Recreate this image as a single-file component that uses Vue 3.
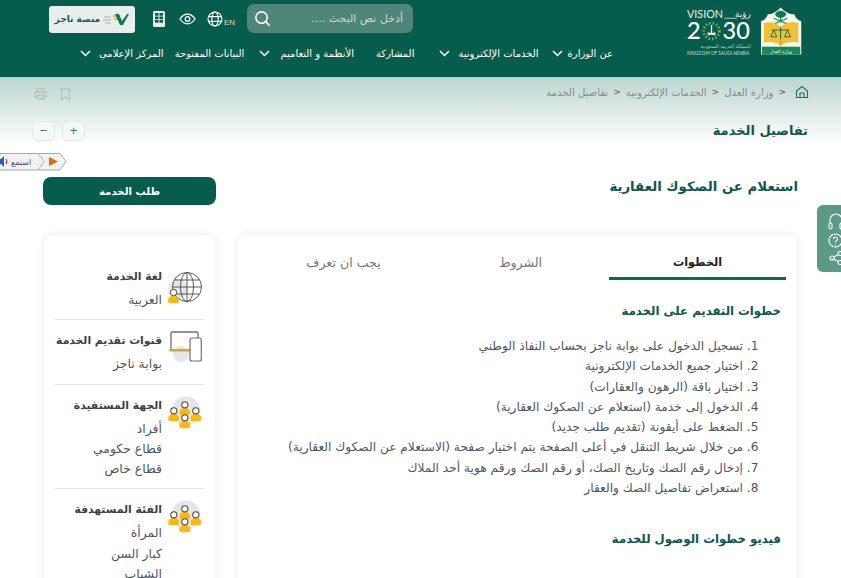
<script setup>
const navItems = [
  { label: "عن الوزارة", arrow: true },
  { label: "الخدمات الإلكترونية", arrow: true },
  { label: "المشاركة", arrow: false },
  { label: "الأنظمة و التعاميم", arrow: true },
  { label: "البيانات المفتوحة", arrow: false },
  { label: "المركز الإعلامي", arrow: true },
];

const crumbs = ["وزارة العدل", "الخدمات الإلكترونية", "تفاصيل الخدمة"];

const tabs = ["الخطوات", "الشروط", "يجب ان تعرف"];

const steps = [
  "تسجيل الدخول على بوابة ناجز بحساب النفاذ الوطني",
  "اختيار جميع الخدمات الإلكترونية",
  "اختيار باقة (الرهون والعقارات)",
  "الدخول إلى خدمة (استعلام عن الصكوك العقارية)",
  "الضغط على أيقونة (تقديم طلب جديد)",
  "من خلال شريط التنقل في أعلى الصفحة يتم اختيار صفحة (الاستعلام عن الصكوك العقارية)",
  "إدخال رقم الصك وتاريخ الصك، أو رقم الصك ورقم هوية أحد الملاك",
  "استعراض تفاصيل الصك والعقار",
];

const sideItems = [
  { icon: "globe", title: "لغة الخدمة", lines: ["العربية"] },
  { icon: "devices", title: "قنوات تقديم الخدمة", lines: ["بوابة ناجز"] },
  { icon: "group", title: "الجهة المستفيدة", lines: ["أفراد", "قطاع حكومي", "قطاع خاص"] },
  { icon: "group", title: "الفئة المستهدفة", lines: ["المرأة", "كبار السن", "الشباب"] },
];

const people = [
  { x: 11, y: 5 },
  { x: 0, y: 11 },
  { x: 22, y: 11 },
  { x: 11, y: 18 },
];
</script>

<template>
  <div class="page" dir="rtl">
    <header class="header">
      <div class="logos">
        <svg class="moj-logo" width="43" height="50" viewBox="0 0 43 50">
          <path d="M1 49V15C5 14 7 11 8 8c4 0 8-2 13-7 5 5 9 7 14 7 1 3 3 6 7 7v34z" fill="#f4f6f2" />
          <path d="M21 7v9" stroke="#0d7a4d" stroke-width="1.5" />
          <ellipse cx="21" cy="8" rx="5.5" ry="3.5" fill="#0d7a4d" />
          <path d="M14 12l14 6M28 12l-14 6" stroke="#2a8a50" stroke-width="1.2" />
          <path d="M4 17c7-2 13 0 17 4 4-4 11-6 18-4v20c-7-2-14 0-18 3-4-3-10-5-17-3z" fill="#f3bf37" />
          <path d="M21 21v19" stroke="#cf9420" />
          <path d="M12 24h18M21 21v12M14 24l-3 7h6zM28 24l-3 7h6z" stroke="#0d6a45" fill="none" stroke-width="0.9" />
          <rect x="2" y="41" width="39" height="8" fill="#178a55" />
          <text x="21.5" y="47.5" text-anchor="middle" class="moj-text">وزارة العدل</text>
        </svg>
        <svg class="vision-logo" width="66" height="50" viewBox="0 0 66 50">
          <text x="0" y="12" class="v-word">VISION</text>
          <text x="65" y="11" text-anchor="end" class="v-ar">رؤية</text>
          <path d="M38 12h13" stroke="#d9e8e2" stroke-width="0.8" />
          <text x="0" y="33" class="v-year">2</text>
          <text x="64" y="33" text-anchor="end" class="v-year">30</text>
          <circle cx="25" cy="25" r="8" fill="none" stroke="#6fae5a" stroke-width="3" stroke-dasharray="1.5 2" />
          <path d="M25 19v8M21 29l8-2M29 29l-8-2" stroke="#fff" stroke-width="1.3" />
          <text x="65" y="42" text-anchor="end" class="v-small">المملكة العربية السعودية</text>
          <text x="0" y="49" class="v-tiny">KINGDOM OF SAUDI ARABIA</text>
        </svg>
      </div>

      <div class="header-main">
        <div class="top-row">
          <div class="search">
            <span class="search-text">أدخل نص البحث ....</span>
            <svg width="17" height="17" viewBox="0 0 18 18" fill="none" stroke="#fff" stroke-width="1.7">
              <circle cx="8" cy="8" r="6" />
              <path d="M12.5 12.5l4 4" />
            </svg>
          </div>
          <div class="lang">
            <span class="lang-en">EN</span>
            <svg width="16" height="16" viewBox="0 0 16 16" fill="none" stroke="#fff" stroke-width="1.1">
              <circle cx="8" cy="8" r="7" />
              <ellipse cx="8" cy="8" rx="3.2" ry="7" />
              <path d="M1 5.6h14M1 10.4h14" />
            </svg>
          </div>
          <svg width="17" height="12" viewBox="0 0 17 12" fill="none" stroke="#fff" stroke-width="1.3">
            <path d="M1 6c2-3 4.500-4.800 7.500-4.800S14 3 16 6c-2 3-4.500 4.800-7.500 4.800S3 9 1 6z" />
            <circle cx="8.500" cy="6" r="2.300" />
          </svg>
          <svg class="phone" width="12" height="16" viewBox="0 0 12 16">
            <rect width="12" height="16" rx="1.500" fill="#e8eeec" />
            <rect x="2" y="2" width="3.500" height="2.700" fill="#075d4b" />
            <rect x="6.500" y="2" width="3.500" height="2.700" fill="#075d4b" />
            <rect x="2" y="5.500" width="3.500" height="2.700" fill="#075d4b" />
            <rect x="6.500" y="5.500" width="3.500" height="2.700" fill="#075d4b" />
            <rect x="2" y="9" width="3.500" height="2.700" fill="#075d4b" />
            <rect x="6.500" y="9" width="3.500" height="2.700" fill="#075d4b" />
          </svg>
          <button class="naji">
            <svg width="26" height="14" viewBox="0 0 26 14" fill="none">
              <path d="M10 4h6M11 7h5" stroke="#e8a82d" stroke-width="1.400" />
              <path d="M12 2h4l3 7 5-7h2l-6 11h-3z" fill="#0f7a4e" />
              <path d="M1 5h7M0 8h8M2 11h6" stroke="#a7b2ae" stroke-width="1" />
            </svg>
            <span>منصة ناجز</span>
          </button>
        </div>
        <nav class="nav">
          <div v-for="item in navItems" :key="item.label" class="nav-item">
            <span>{{ item.label }}</span>
            <svg v-if="item.arrow" width="11" height="7" viewBox="0 0 11 7" fill="none" stroke="#fff" stroke-width="1.500">
              <path d="M1 1l4.500 4.500L10 1" />
            </svg>
          </div>
        </nav>
      </div>
    </header>

    <section class="hero">
      <div class="crumb-row">
        <div class="crumbs">
          <svg class="home" width="14" height="14" viewBox="0 0 14 14" fill="none" stroke="#2b6b60" stroke-width="1.100">
            <path d="M1.500 6L7 1.500 12.500 6v6.500h-11z" />
            <path d="M5 12.500V8h4v4.500" />
          </svg>
          <template v-for="crumb in crumbs" :key="crumb">
            <span class="crumb-sep">&gt;</span>
            <span>{{ crumb }}</span>
          </template>
        </div>
        <div class="crumb-tools">
          <svg width="11" height="13" viewBox="0 0 11 13" fill="none" stroke="#b5c4bf" stroke-width="1.300">
            <path d="M1.500 1h8v11L5.500 9l-4 3z" />
          </svg>
          <svg width="13" height="12" viewBox="0 0 13 12" fill="none" stroke="#b5c4bf" stroke-width="1.300">
            <path d="M3 4V1h7v3M3 9H1V4h11v5h-2M3 7.500h7V11H3z" />
          </svg>
        </div>
      </div>
      <div class="title-row">
        <h1>تفاصيل الخدمة</h1>
        <div class="zoom-btns">
          <button>+</button>
          <button>−</button>
        </div>
      </div>
    </section>

    <div class="listen">
      <svg width="67" height="18" viewBox="0 0 67 18">
        <path d="M-1 .5h61l6 8-6 8.500H-1z" fill="#f2f2f2" stroke="#a9a9a9" />
        <path d="M38 .5l6 8-6 8.500" fill="none" stroke="#b5b5b5" />
        <path d="M49 4l9 4.500L49 13z" fill="#e26a0a" />
        <text x="21" y="11.500" text-anchor="middle" class="listen-text">استمع</text>
        <path d="M-2 6h3l3-3v11l-3-3h-3z" fill="#1f5fc0" />
        <path d="M6 6c1 1.500 1 3.500 0 5" fill="none" stroke="#d8402a" stroke-width="1.200" />
      </svg>
    </div>

    <aside class="float-tab">
      <svg width="16" height="17" viewBox="0 0 16 17" fill="none" stroke="#fff" stroke-width="1.100">
        <path d="M2 10V7a6 6 0 0 1 12 0v3" />
        <rect x="1" y="10" width="3" height="6" rx="1.500" />
        <rect x="12" y="10" width="3" height="6" rx="1.500" />
      </svg>
      <svg width="15" height="15" viewBox="0 0 15 15" fill="none" stroke="#fff" stroke-width="1.100">
        <circle cx="7.500" cy="7.500" r="6.500" />
        <path d="M5.500 6a2 2 0 1 1 3 1.700c-.7.400-1 .8-1 1.500M7.500 11v.8" />
      </svg>
      <svg width="14" height="14" viewBox="0 0 14 14" fill="none" stroke="#fff" stroke-width="1.100">
        <circle cx="3" cy="7" r="2" />
        <circle cx="11" cy="2.500" r="2" />
        <circle cx="11" cy="11.500" r="2" />
        <path d="M5 6l4-2.500M5 8l4 2.500" />
      </svg>
    </aside>

    <div class="content">
      <div class="service-row">
        <h2>استعلام عن الصكوك العقارية</h2>
        <button class="request-btn">طلب الخدمة</button>
      </div>

      <div class="columns">
        <main class="card main-card">
          <div class="tabs">
            <div v-for="(tab, i) in tabs" :key="tab" class="tab" :class="{ active: i === 0 }">{{ tab }}</div>
          </div>
          <h3>خطوات التقديم على الخدمة</h3>
          <ol class="steps">
            <li v-for="step in steps" :key="step">{{ step }}</li>
          </ol>
          <h3 class="video-title">فيديو خطوات الوصول للخدمة</h3>
        </main>

        <aside class="card side-card">
          <div v-for="item in sideItems" :key="item.title" class="side-item">
            <svg v-if="item.icon === 'globe'" class="side-icon globe-icon" width="34" height="32" viewBox="0 0 34 32">
              <circle cx="10" cy="17" r="10" fill="#e4e6e8" />
              <g fill="none" stroke="#4a4a4a" stroke-width="0.900">
                <circle cx="19" cy="15" r="14.500" />
                <ellipse cx="19" cy="15" rx="6.500" ry="14.500" />
                <path d="M19 .5v29M4.500 15h29M6.500 8h25M6.500 22h25" />
              </g>
              <circle cx="5.500" cy="20.500" r="3.200" fill="#fff" stroke="#4a4a4a" />
              <path d="M0 29c0-3 2-5 5.500-5s5.500 2 5.500 5c0 1.500-1 2-2 2H2c-1 0-2-.5-2-2z" fill="#fdb813" />
            </svg>
            <svg v-else-if="item.icon === 'devices'" class="side-icon" width="34" height="32" viewBox="0 0 34 32">
              <circle cx="13" cy="23" r="8" fill="#e6e7e9" />
              <path d="M3 18V2a1 1 0 0 1 1-1h25a1 1 0 0 1 1 1v5" fill="none" stroke="#707070" stroke-width="1.300" />
              <path d="M1 18h21v2.500H2z" fill="#d6a52c" />
              <rect x="22" y="7" width="11.300" height="23" rx="2" fill="#fff" stroke="#707070" stroke-width="1.200" />
            </svg>
            <svg v-else class="side-icon" width="34" height="33" viewBox="0 0 34 33">
              <circle cx="18" cy="15" r="14.500" fill="#e4e6e8" />
              <g v-for="p in people" :key="p.x + '-' + p.y" :transform="`translate(${p.x} ${p.y})`">
                <path d="M0 11.500c0-3 2-5 5.800-5s5.800 2 5.800 5v.5c0 1.500-1 2.500-2.500 2.500H2.500C1 14.500 0 13.500 0 12z" fill="#fdb813" stroke="#fff" stroke-width="0.500" />
                <circle cx="5.800" cy="3.800" r="3.100" fill="#fff" stroke="#4a4a4a" stroke-width="1.100" />
              </g>
            </svg>
            <div class="side-text">
              <h4>{{ item.title }}</h4>
              <p v-for="line in item.lines" :key="line">{{ line }}</p>
            </div>
          </div>
        </aside>
      </div>
    </div>
  </div>
</template>

<style>
html,
body {
  margin: 0;
  background: #fff;
}
</style>

<style scoped>
.page {
  position: relative;
  width: 841px;
  height: 578px;
  overflow: hidden;
  background: #fff;
  font-family: "DejaVu Sans", sans-serif;
  color: #50565e;
}

.header {
  display: flex;
  height: 77px;
  box-sizing: border-box;
  background: #075d4b;
  padding: 4px 39px 0 0;
  color: #fff;
}

.logos {
  display: flex;
  gap: 8px;
  width: 115px;
  padding-top: 2px;
  margin-left: 74px;
}

.vision-logo {
  direction: ltr;
}

.moj-text {
  font-size: 4.500px;
  fill: #fff;
}

.v-word {
  font-family: "Lato", sans-serif;
  font-size: 11px;
  fill: #e6efec;
}

.v-ar {
  font-size: 9px;
  fill: #e6efec;
}

.v-year {
  font-family: "Lato", sans-serif;
  font-size: 24px;
  font-weight: 500;
  fill: #fff;
}

.v-small {
  font-size: 5px;
  fill: #b6d0c7;
}

.v-tiny {
  font-family: "Lato", sans-serif;
  font-size: 4.700px;
  fill: #c8dcd5;
}

.header-main {
  display: flex;
  flex-direction: column;
}

.top-row {
  display: flex;
  align-items: center;
  gap: 11px;
  height: 29px;
  padding-right: 200px;
}

.search {
  display: flex;
  align-items: center;
  justify-content: space-between;
  box-sizing: border-box;
  width: 166px;
  height: 29px;
  padding: 0 10px 0 7px;
  border-radius: 7px;
  background: #4f8677;
}

.search-text {
  font-size: 11px;
  color: #c9dad5;
  white-space: nowrap;
}

.lang {
  display: flex;
  align-items: flex-end;
  gap: 1px;
  margin-right: 1px;
}

.lang-en {
  font-family: "Liberation Sans", sans-serif;
  font-size: 8px;
  color: #d0dfda;
}

.phone {
  margin-right: 3px;
}

.naji {
  display: flex;
  align-items: center;
  justify-content: center;
  gap: 3px;
  width: 86px;
  height: 27px;
  margin-right: 7px;
  margin-top: 1px;
  padding: 0;
  border: none;
  border-radius: 3px;
  background: #e8eeec;
  color: #1d5a4a;
  font-family: inherit;
  font-size: 9px;
  font-weight: 700;
  white-space: nowrap;
}

.nav {
  display: flex;
  align-items: center;
  height: 18px;
  margin-top: 11px;
  gap: 15px;
}

.nav-item {
  display: flex;
  align-items: center;
  gap: 8px;
  font-size: 10px;
  white-space: nowrap;
}

.nav-item:nth-child(1) {
  gap: 5px;
  margin-left: -2px;
}

.nav-item:nth-child(3) {
  margin: 0 10px 0 7px;
}

.nav-item:nth-child(4) {
  gap: 10px;
}

.nav-item:nth-child(5) {
  margin-left: -4px;
}

.hero {
  height: 100px;
  box-sizing: border-box;
  padding: 7px 32px 0 32px;
  background: linear-gradient(180deg, #bdd5ce 0, #fff 68px);
}

.crumb-row {
  display: flex;
  align-items: center;
  justify-content: space-between;
  height: 16px;
}

.crumbs {
  display: flex;
  align-items: center;
  gap: 5px;
  font-size: 10.100px;
  color: #868b8c;
}

.home {
  margin-left: 4px;
}

.crumb-sep {
  font-size: 9px;
  color: #555;
  direction: ltr;
}

.crumb-tools {
  display: flex;
  gap: 13px;
  align-items: center;
  padding: 4px 0 0 2px;
}

.title-row {
  display: flex;
  align-items: center;
  justify-content: space-between;
  height: 20px;
  margin-top: 21px;
}

h1,
h2,
h3,
h4,
p {
  margin: 0;
}

h1 {
  margin-right: 1px;
  font-size: 13px;
  line-height: 20px;
  font-weight: 700;
  color: #0d5a4c;
}

.zoom-btns {
  display: flex;
  gap: 7px;
}

.zoom-btns button {
  width: 23px;
  height: 20px;
  padding: 0;
  border: 1px solid #e3e9e7;
  border-radius: 6px;
  background: #f4f8f7;
  color: #3f7f72;
  font-size: 13px;
  line-height: 16px;
  font-family: "Liberation Sans", sans-serif;
}

.listen {
  position: absolute;
  left: 0;
  top: 153px;
  width: 67px;
  height: 18px;
}

.listen-text {
  font-size: 8px;
  fill: #5d4a68;
}

.float-tab {
  position: absolute;
  top: 205px;
  right: -13px;
  display: flex;
  flex-direction: column;
  align-items: center;
  gap: 3px;
  box-sizing: border-box;
  width: 37px;
  height: 67px;
  padding-top: 8px;
  border-radius: 6px 0 0 6px;
  background: #5b9a87;
}

.content {
  padding: 0 44px;
}

.service-row {
  display: flex;
  align-items: center;
  justify-content: space-between;
  height: 28px;
  margin-bottom: 30px;
}

h2 {
  font-size: 13.300px;
  font-weight: 700;
  color: #0d5a4c;
  margin: 0 -1px 10px 0;
}

.request-btn {
  width: 173px;
  height: 28px;
  margin-left: -1px;
  border: none;
  border-radius: 8px;
  background: #075d4b;
  color: #fff;
  font-family: inherit;
  font-size: 10.200px;
  font-weight: 700;
}

.columns {
  display: flex;
  gap: 23px;
}

.card {
  border-radius: 8px;
  background: #fff;
  box-shadow: 0 0 9px rgba(0, 0, 0, 0.09);
  height: 400px;
  box-sizing: border-box;
}

.main-card {
  width: 559px;
  padding: 13px 11px 0 17px;
}

.tabs {
  display: flex;
}

.tab {
  width: 177px;
  height: 32px;
  box-sizing: border-box;
  border-bottom: 3px solid transparent;
  text-align: center;
  font-size: 12.600px;
  line-height: 30px;
  color: #777;
}

.tab.active {
  border-bottom-color: #0b6b52;
  color: #222;
  font-size: 11.200px;
  font-weight: 700;
}

h3 {
  margin-top: 19px;
  padding-right: 5px;
  font-size: 11.700px;
  line-height: 24px;
  font-weight: 700;
  color: #0d5a4c;
}

.steps {
  margin: 13px 0 0;
  padding: 0 43px 0 0;
  font-size: 12.200px;
  line-height: 20.300px;
  white-space: nowrap;
}

.video-title {
  margin-top: 29px;
}

.side-card {
  width: 171px;
  padding: 21px 11px 0;
}

.side-item {
  display: flex;
  gap: 6px;
  padding: 10px 2px 9px 0;
  border-bottom: 1px solid #e8e8e8;
}

.side-item:last-child {
  border-bottom: none;
}

.side-icon {
  flex: none;
  margin-top: 1px;
}

.globe-icon {
  margin-top: 6px;
}

.side-text {
  min-width: 0;
  white-space: nowrap;
}

h4 {
  font-size: 10.800px;
  line-height: 22px;
  margin-bottom: 2px;
  font-weight: 700;
  color: #3a4048;
}

.side-text p {
  font-size: 12.400px;
  line-height: 20.300px;
}
</style>
